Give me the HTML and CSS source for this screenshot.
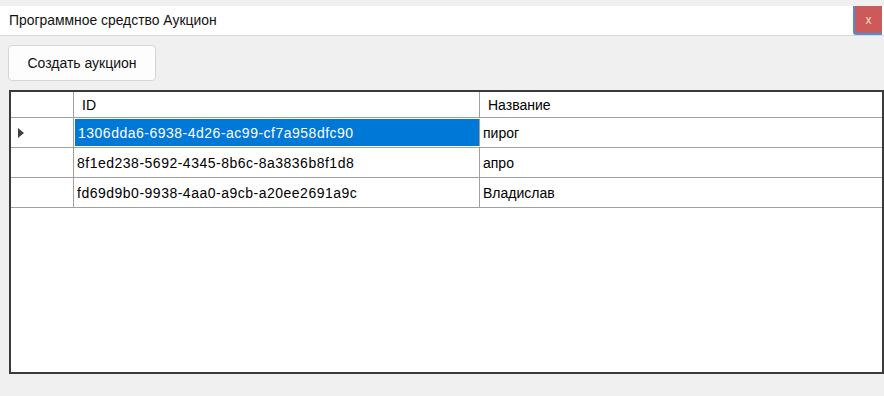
FILE: index.html
```html
<!DOCTYPE html>
<html lang="ru">
<head>
<meta charset="utf-8">
<link rel="stylesheet" href="styles.css">
</head>
<body>
<div class="window">
  <div class="titlebar">
    <div class="title">Программное средство Аукцион</div>
    <div class="close">x</div>
  </div>
  <div class="toolbar">
    <button class="btn">Создать аукцион</button>
  </div>
  <div class="grid">
    <div class="row head">
      <div class="c rh"></div>
      <div class="c id">ID</div>
      <div class="c name">Название</div>
    </div>
    <div class="row">
      <div class="c rh"><span class="arrow"></span></div>
      <div class="c id sel">1306dda6-6938-4d26-ac99-cf7a958dfc90</div>
      <div class="c name">пирог</div>
    </div>
    <div class="row">
      <div class="c rh"></div>
      <div class="c id">8f1ed238-5692-4345-8b6c-8a3836b8f1d8</div>
      <div class="c name">апро</div>
    </div>
    <div class="row">
      <div class="c rh"></div>
      <div class="c id">fd69d9b0-9938-4aa0-a9cb-a20ee2691a9c</div>
      <div class="c name">Владислав</div>
    </div>
  </div>
</div>
</body>
</html>
```
FILE: styles.css
```css
* { box-sizing: border-box; }
html, body { margin: 0; padding: 0; }
body {
  width: 884px;
  height: 396px;
  background: #f0f0f0;
  font-family: "Liberation Sans", Arial, sans-serif;
  font-size: 14px;
  color: #000;
  overflow: hidden;
}
.window { padding-top: 6px; }
.titlebar {
  height: 30px;
  background: #fff;
  border-bottom: 1px solid #d9d9d9;
  display: flex;
  align-items: stretch;
  justify-content: space-between;
}
.title {
  padding-left: 9px;
  line-height: 28px;
  font-size: 13.9px;
  color: #111;
}
.close {
  width: 29px;
  margin-right: 2px;
  background: #cd5a5a;
  border-left: 2px solid #4a90d9;
  border-bottom: 2px solid #4a90d9;
  border-radius: 0 0 0 3px;
  color: #f3e0c0;
  font-size: 12px;
  display: flex;
  align-items: center;
  justify-content: center;
}
.toolbar {
  padding: 9px 0 0 8px;
  height: 54px;
}
.btn {
  width: 148px;
  height: 36px;
  background: #fdfdfd;
  border: 1px solid #d6d6d6;
  border-radius: 4px;
  font-family: inherit;
  font-size: 14px;
  color: #111;
  padding: 0;
}
.grid {
  margin-left: 9px;
  width: 875px;
  height: 284px;
  background: #fff;
  border: 2px solid #3a3a3a;
}
.row {
  display: flex;
  height: 30px;
  border-bottom: 1px solid #a0a0a0;
}
.row.head { height: 26px; border-bottom: 1px solid #a0a0a0; }
.c {
  display: flex;
  align-items: center;
  white-space: nowrap;
}
.rh {
  width: 63px;
  border-right: 1px solid #a0a0a0;
  padding-left: 7px;
}
.id {
  width: 406px;
  border-right: 1px solid #a0a0a0;
  padding-left: 3px;
  letter-spacing: 0.5px;
}
.name { flex: 1; padding-left: 3px; }
.head .id { padding-left: 8px; letter-spacing: 0; }
.head .name { padding-left: 8px; }
.sel {
  background: #0078d7;
  color: #fff;
  margin: 1px 0 1px 1px;
  padding-left: 3px;
  width: 405px;
}
.arrow {
  width: 0;
  height: 0;
  border-top: 5px solid transparent;
  border-bottom: 5px solid transparent;
  border-left: 6px solid #404040;
}
```
